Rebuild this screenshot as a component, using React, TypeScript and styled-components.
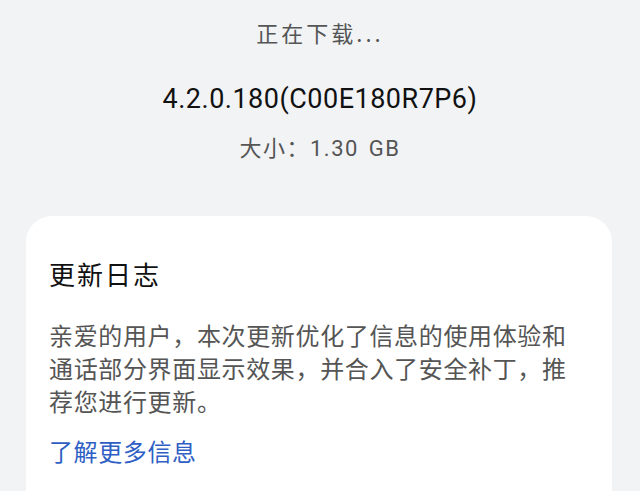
import styled, { createGlobalStyle } from 'styled-components'

const GlobalStyle = createGlobalStyle`
  html, body {
    margin: 0;
    padding: 0;
    background: #f1f3f5;
  }
  body {
    font-family: "Noto Sans CJK SC", Roboto, "Noto Sans", sans-serif;
    -webkit-font-smoothing: antialiased;
  }
`

const Page = styled.div`
  display: flex;
  flex-direction: column;
  align-items: stretch;
  height: 491px;
  overflow: hidden;
  background: #f1f3f5;
`

const Header = styled.header`
  display: flex;
  flex-direction: column;
  align-items: center;
  padding-top: 17px;
`

const Status = styled.div`
  font-size: 22px;
  line-height: 30px;
  color: #555;
  letter-spacing: 3px;
`

const Version = styled.div`
  margin-top: 34px;
  font-family: Roboto, "Noto Sans CJK SC", sans-serif;
  font-size: 27px;
  line-height: 36px;
  color: #111;
  letter-spacing: 0.5px;
`

const Size = styled.div`
  margin-top: 14px;
  font-size: 22px;
  line-height: 30px;
  color: #555;
  letter-spacing: 1.5px;
`

const Num = styled.span`
  font-family: Roboto, "Noto Sans CJK SC", sans-serif;
  word-spacing: 3px;
`

const Card = styled.section`
  margin: 52px 28px 0 26px;
  padding: 40px 23px 0;
  background: #fff;
  border-radius: 26px;
  flex-shrink: 0;
  height: 400px;
  display: flex;
  flex-direction: column;
`

const Title = styled.h2`
  margin: 0;
  font-size: 26px;
  line-height: 36px;
  font-weight: 400;
  color: #111;
  letter-spacing: 2px;
`

const Body = styled.p`
  margin: 26px 0 0;
  font-size: 24px;
  line-height: 33px;
  color: #555;
  letter-spacing: 0.65px;
`

const Link = styled.a`
  margin-top: 17px;
  align-self: flex-start;
  font-size: 24px;
  line-height: 33px;
  color: #2f5fc4;
  text-decoration: none;
  letter-spacing: 0.6px;
`

export default function App() {
  return (
    <Page>
      <GlobalStyle />
      <Header>
        <Status>正在下载...</Status>
        <Version>4.2.0.180(C00E180R7P6)</Version>
        <Size>
          大小：<Num>1.30 GB</Num>
        </Size>
      </Header>
      <Card>
        <Title>更新日志</Title>
        <Body>
          亲爱的用户，本次更新优化了信息的使用体验和通话部分界面显示效果，并合入了安全补丁，推荐您进行更新。
        </Body>
        <Link href="#">了解更多信息</Link>
      </Card>
    </Page>
  )
}
